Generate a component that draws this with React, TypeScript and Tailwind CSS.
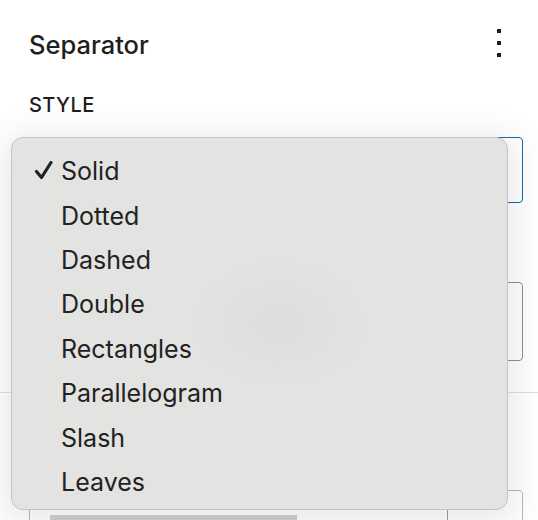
import React from 'react';

const options = ['Solid', 'Dotted', 'Dashed', 'Double', 'Rectangles', 'Parallelogram', 'Slash', 'Leaves'];

const MoreVertical: React.FC = () => (
  <svg width="48" height="48" viewBox="0 0 24 24" className="fill-[#1e1e1e]">
    <path d="M13 19h-2v-2h2v2zm0-6h-2v-2h2v2zm0-6h-2V5h2v2z" />
  </svg>
);

const Check: React.FC = () => (
  <svg width="20" height="20" viewBox="0 0 20 20" className="shrink-0">
    <path d="M2.5 10.5 L7.5 16.5 L17 1.5" fill="none" stroke="#222" strokeWidth="3.2" strokeLinecap="round" strokeLinejoin="round" />
  </svg>
);

const App: React.FC = () => {
  const selected = 'Solid';

  return (
    <div className="relative h-[520px] w-[538px] overflow-hidden bg-white font-['Inter',sans-serif] text-[#1e1e1e]">
      <div className="pl-[29px] pr-[15px] pt-[19px]">
        <div className="flex h-[48px] items-center justify-between">
          <h2 className="mt-[3px] text-[25.5px] font-medium leading-[30px]">Separator</h2>
          <MoreVertical />
        </div>
        <div className="mt-[26px] text-[20px] font-medium uppercase leading-[24px] tracking-[0.4px]">Style</div>
        <div className="mt-[20px] h-[66px] rounded-[4px] border-[1.5px] border-[#0e6aad]" />
        <div className="mt-[79px] h-[79px] rounded-[4px] border-[1.5px] border-[#8f8f8f]" />
      </div>

      <div className="mt-[31px] border-t border-[#e0e0e0]" />

      <div className="pl-[29px] pr-[15px] pt-[97px]">
        <div className="flex h-[60px] rounded-[4px] border-[1.5px] border-[#b8b8b8]">
          <div className="flex-1 px-[20px] pt-[24px]">
            <div className="h-[20px] w-[247px] bg-[#d0d0d0]" />
          </div>
          <div className="w-[75px] border-l border-[#a0a0a0]" />
        </div>
      </div>

      {/* open style dropdown */}
      <div className="absolute left-[11px] top-[137px] h-[373px] w-[497px] rounded-[12px] border border-[#c4c4c4] bg-[#e3e3e2] bg-[radial-gradient(85px_62px_at_267px_185px,#dddddc,#e3e3e2)] pt-[11px] shadow-[0_6px_36px_8px_rgba(0,0,0,0.09)]">
        <ul>
          {options.map(option => (
            <li key={option} className="flex h-[44.4px] items-center text-[25px] leading-[44px] text-[#222]">
              <span className="flex w-[49px] justify-end pr-[7px]">
                {option === selected ? <Check /> : null}
              </span>
              <span>{option}</span>
            </li>
          ))}
        </ul>
      </div>
    </div>
  );
};

export default App;
